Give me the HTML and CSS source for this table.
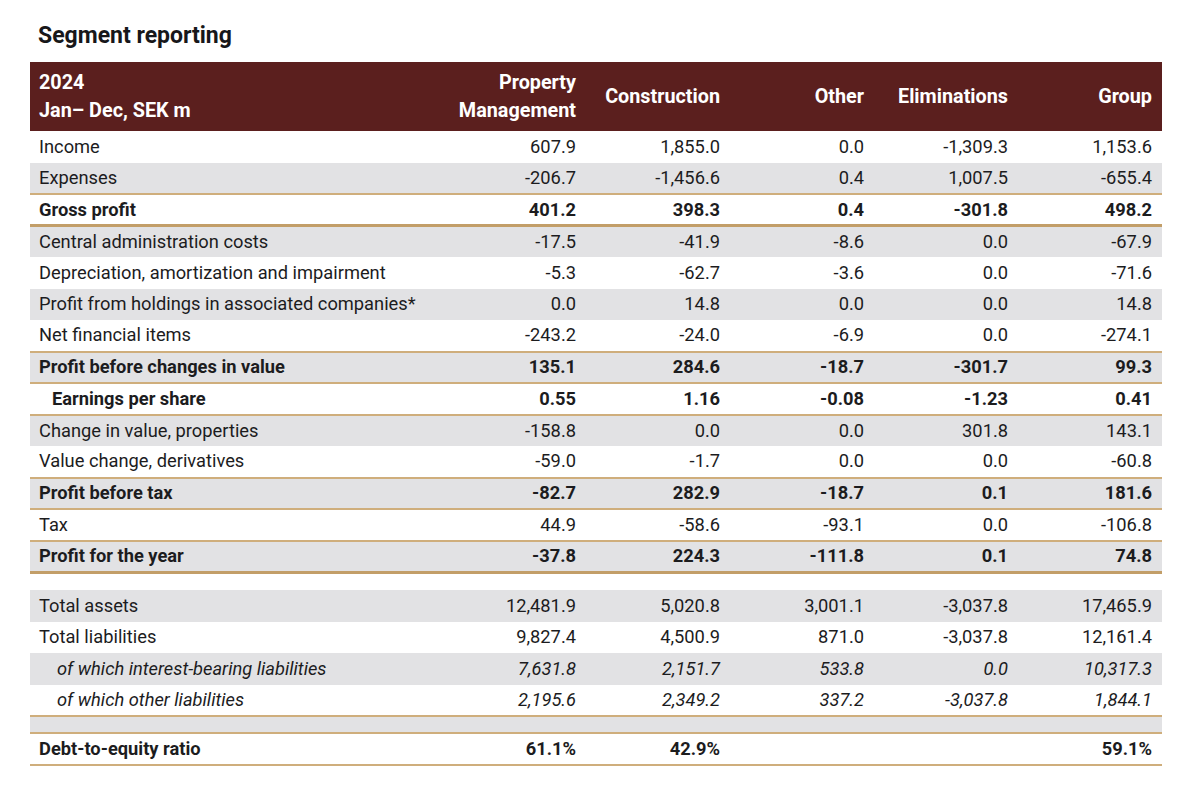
FILE: index.html
```html
<!DOCTYPE html>
<html lang="en">
<head>
    <meta charset="UTF-8">
    <title>Segment reporting</title>
    <link rel="stylesheet" href="styles.css">
</head>
<body>
    <div class="page">
        <h1 class="title">Segment reporting</h1>
        <table class="segments">
            <thead>
                <tr>
                    <th class="label">2024<br>Jan– Dec, SEK m</th>
                    <th>Property<br>Management</th>
                    <th>Construction</th>
                    <th>Other</th>
                    <th>Eliminations</th>
                    <th>Group</th>
                </tr>
            </thead>
            <tbody>
                <tr><td class="label">Income</td><td>607.9</td><td>1,855.0</td><td>0.0</td><td>-1,309.3</td><td>1,153.6</td></tr>
                <tr class="grey line"><td class="label">Expenses</td><td>-206.7</td><td>-1,456.6</td><td>0.4</td><td>1,007.5</td><td>-655.4</td></tr>
                <tr class="bold line thick"><td class="label">Gross profit</td><td>401.2</td><td>398.3</td><td>0.4</td><td>-301.8</td><td>498.2</td></tr>
                <tr class="grey"><td class="label">Central administration costs</td><td>-17.5</td><td>-41.9</td><td>-8.6</td><td>0.0</td><td>-67.9</td></tr>
                <tr><td class="label">Depreciation, amortization and impairment</td><td>-5.3</td><td>-62.7</td><td>-3.6</td><td>0.0</td><td>-71.6</td></tr>
                <tr class="grey"><td class="label">Profit from holdings in associated companies*</td><td>0.0</td><td>14.8</td><td>0.0</td><td>0.0</td><td>14.8</td></tr>
                <tr class="line"><td class="label">Net financial items</td><td>-243.2</td><td>-24.0</td><td>-6.9</td><td>0.0</td><td>-274.1</td></tr>
                <tr class="grey bold line"><td class="label">Profit before changes in value</td><td>135.1</td><td>284.6</td><td>-18.7</td><td>-301.7</td><td>99.3</td></tr>
                <tr class="bold line"><td class="label indent">Earnings per share</td><td>0.55</td><td>1.16</td><td>-0.08</td><td>-1.23</td><td>0.41</td></tr>
                <tr class="grey"><td class="label">Change in value, properties</td><td>-158.8</td><td>0.0</td><td>0.0</td><td>301.8</td><td>143.1</td></tr>
                <tr class="line"><td class="label">Value change, derivatives</td><td>-59.0</td><td>-1.7</td><td>0.0</td><td>0.0</td><td>-60.8</td></tr>
                <tr class="grey bold line"><td class="label">Profit before tax</td><td>-82.7</td><td>282.9</td><td>-18.7</td><td>0.1</td><td>181.6</td></tr>
                <tr class="line"><td class="label">Tax</td><td>44.9</td><td>-58.6</td><td>-93.1</td><td>0.0</td><td>-106.8</td></tr>
                <tr class="grey bold line thick"><td class="label">Profit for the year</td><td>-37.8</td><td>224.3</td><td>-111.8</td><td>0.1</td><td>74.8</td></tr>
                <tr class="spacer"><td colspan="6"></td></tr>
                <tr class="grey"><td class="label">Total assets</td><td>12,481.9</td><td>5,020.8</td><td>3,001.1</td><td>-3,037.8</td><td>17,465.9</td></tr>
                <tr><td class="label">Total liabilities</td><td>9,827.4</td><td>4,500.9</td><td>871.0</td><td>-3,037.8</td><td>12,161.4</td></tr>
                <tr class="grey italic"><td class="label sub">of which interest-bearing liabilities</td><td>7,631.8</td><td>2,151.7</td><td>533.8</td><td>0.0</td><td>10,317.3</td></tr>
                <tr class="italic line"><td class="label sub">of which other liabilities</td><td>2,195.6</td><td>2,349.2</td><td>337.2</td><td>-3,037.8</td><td>1,844.1</td></tr>
                <tr class="grey line empty"><td colspan="6"></td></tr>
                <tr class="bold line"><td class="label">Debt-to-equity ratio</td><td>61.1%</td><td>42.9%</td><td></td><td></td><td>59.1%</td></tr>
            </tbody>
        </table>
    </div>
</body>
</html>
```

FILE: styles.css
```css
body {
    margin: 0;
    background: #fff;
    font-family: Roboto, "Liberation Sans", sans-serif;
    color: #1c1c1e;
}

.page {
    padding: 22px 38px 0 30px;
}

.title {
    margin: 0 0 13px 8px;
    font-size: 23px;
    font-weight: 700;
    line-height: 27px;
    color: #17171a;
}

.segments {
    width: 1132px;
    border-collapse: collapse;
    table-layout: fixed;
    font-size: 18.3px;
}

.segments th {
    background: #5b1f1e;
    color: #fff;
    font-weight: 700;
    font-size: 19.8px;
    line-height: 28px;
    height: 69px;
    padding: 0 10px;
    text-align: right;
    width: 124px;
}

.segments th.label {
    width: 403px;
    padding: 0 0 0 9px;
    text-align: left;
}

.segments td {
    height: 31.5px;
    padding: 0 10px;
    text-align: right;
    line-height: 20px;
    box-sizing: border-box;
}

.segments td.label {
    padding-left: 9px;
    text-align: left;
    white-space: nowrap;
}

.segments td.indent {
    padding-left: 22px;
}

.segments td.sub {
    padding-left: 27px;
}

.grey td {
    background: #e2e2e4;
}

.bold td {
    font-weight: 700;
}

.italic td {
    font-style: italic;
}

.line td {
    border-bottom: 2px solid #cfae7c;
}

.thick td {
    border-bottom: 3px solid #c29e68;
}

.spacer td {
    height: 18px;
}

.empty td {
    height: 17px;
}
```
